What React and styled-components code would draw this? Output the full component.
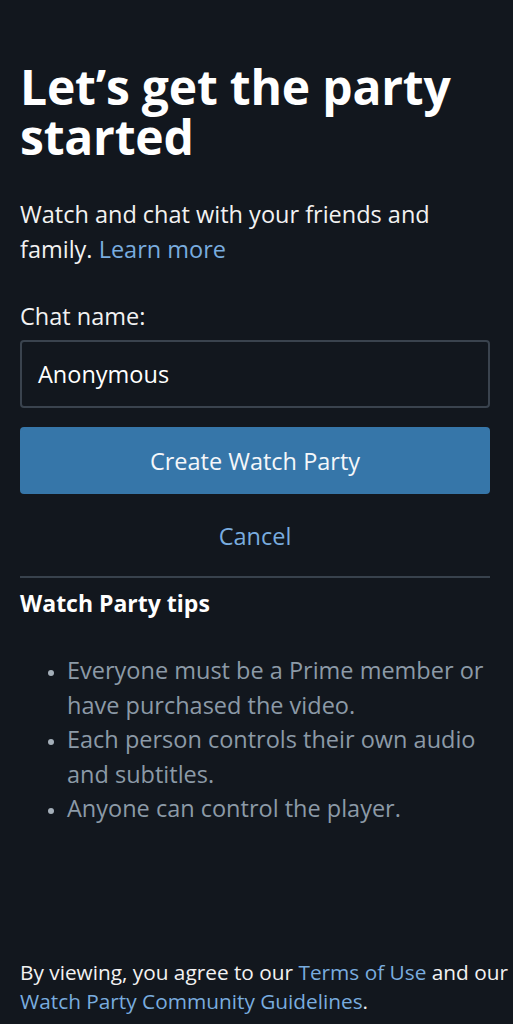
import React from 'react';
import styled, { createGlobalStyle } from 'styled-components';

const GlobalStyle = createGlobalStyle`
  html, body {
    margin: 0;
    padding: 0;
    background: #12171e;
  }
  body {
    font-family: "Open Sans", "Noto Sans", sans-serif;
    color: #ffffff;
  }
`;

const Page = styled.div`
  min-height: 1024px;
  box-sizing: border-box;
  padding: 62px 23px 0 20px;
  display: flex;
  flex-direction: column;
  background: #12171e;
`;

const Title = styled.h1`
  margin: 0;
  font-size: 48px;
  line-height: 50px;
  font-weight: 700;
  letter-spacing: -0.2px;
`;

const Intro = styled.p`
  margin: 35px 0 0;
  font-size: 23.5px;
  line-height: 35px;
  color: #f2f2f2;
`;

const Link = styled.a`
  color: #79acdf;
  text-decoration: none;
`;

const Label = styled.label`
  margin-top: 33px;
  font-size: 23.5px;
  line-height: 32px;
  color: #f2f2f2;
`;

const Input = styled.div`
  margin-top: 8px;
  height: 68px;
  box-sizing: border-box;
  border: 2px solid #3a434e;
  border-radius: 4px;
  display: flex;
  align-items: center;
  padding-left: 16px;
  font-size: 23.5px;
  color: #ffffff;
`;

const PrimaryButton = styled.button`
  margin-top: 19px;
  height: 67px;
  border: none;
  border-radius: 4px;
  background: #3676a9;
  color: #f4f7fa;
  font-family: inherit;
  font-size: 23.5px;
`;

const TextButton = styled.button`
  margin-top: 21px;
  background: none;
  border: none;
  font-family: inherit;
  font-size: 23.5px;
  line-height: 40px;
  color: #79acdf;
`;

const Divider = styled.hr`
  margin: 19px 0 0;
  border: none;
  border-top: 2px solid #38424d;
`;

const TipsHeading = styled.h2`
  margin: 10px 0 0;
  font-size: 23px;
  line-height: 30px;
  font-weight: 700;
`;

const Tips = styled.ul`
  margin: 35px 0 0;
  padding-left: 47px;
  font-size: 23.5px;
  line-height: 34.5px;
  color: #8c9aa7;

  li::marker {
    font-size: 18px;
    color: #a4afb9;
  }
`;

const Spacer = styled.div`
  flex: 1;
`;

const Footer = styled.p`
  margin: 0 -23px 8px 0;
  font-size: 20.8px;
  line-height: 29px;
  color: #f2f2f2;
`;

export default function App() {
  return (
    <>
      <GlobalStyle />
      <Page>
        <Title>Let’s get the party started</Title>
        <Intro>
          Watch and chat with your friends and family. <Link href="#">Learn more</Link>
        </Intro>
        <Label>Chat name:</Label>
        <Input>Anonymous</Input>
        <PrimaryButton>Create Watch Party</PrimaryButton>
        <TextButton>Cancel</TextButton>
        <Divider />
        <TipsHeading>Watch Party tips</TipsHeading>
        <Tips>
          <li>Everyone must be a Prime member or have purchased the video.</li>
          <li>Each person controls their own audio and subtitles.</li>
          <li>Anyone can control the player.</li>
        </Tips>
        <Spacer />
        <Footer>
          By viewing, you agree to our <Link href="#">Terms of Use</Link> and our{' '}
          <Link href="#">Watch Party Community Guidelines</Link>.
        </Footer>
      </Page>
    </>
  );
}
